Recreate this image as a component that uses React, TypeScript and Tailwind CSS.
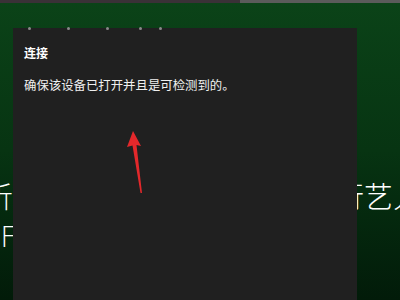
export default function App() {
  return (
    <div className="relative w-[400px] h-[300px] overflow-hidden bg-gradient-to-b from-[#0b4318] via-[#073412] to-[#021b09] font-['Noto_Sans_CJK_SC',sans-serif]">
      {/* top strip */}
      <div className="flex h-[3px]">
        <div className="w-[240px] bg-[#3a3137]" />
        <div className="flex-1 bg-[#5b5b5b]" />
      </div>

      {/* background slide text */}
      <div className="flex flex-col pt-[172px] text-white">
        <div className="flex justify-between text-[29px] leading-[40px] font-light">
          <span className="-ml-[16px]">析</span>
          <span className="-mr-[22px]">行艺人</span>
        </div>
        <div className="mt-[8px] -ml-[7px] text-[28px] leading-[30px] font-light font-['DejaVu_Sans',sans-serif] tracking-[-1px]">IF</div>
      </div>

      {/* flyout panel */}
      <div className="absolute left-[13px] top-[28px] w-[344px] h-[272px] bg-[#202020] px-[11px]">
        <div className="flex h-[3px] -mt-[1px] pl-[4px] gap-[36px]">
          <span className="w-[3px] h-[3px] rounded-full bg-[#8a8a8a]" />
          <span className="w-[3px] h-[3px] rounded-full bg-[#8a8a8a]" />
          <span className="w-[3px] h-[3px] rounded-full bg-[#8a8a8a]" />
          <span className="w-[3px] h-[3px] rounded-full bg-[#8a8a8a] -ml-[6px]" />
          <span className="w-[3px] h-[3px] rounded-full bg-[#8a8a8a] -ml-[19px]" />
        </div>
        <div className="pt-[15px] text-[12px] leading-[16px] font-bold text-white">连接</div>
        <div className="mt-[16px] text-[12.4px] leading-[16px] text-[#f0f0f0]">确保该设备已打开并且是可检测到的。</div>
      </div>

      {/* annotation arrow */}
      <svg className="absolute left-[120px] top-[125px]" width="40" height="75" viewBox="0 0 40 75">
        <path d="M13 6 L21 21 L16.5 20 L22 68 L20.5 68 L12.5 20.5 L7 22 Z" fill="#e3282b" />
      </svg>
    </div>
  );
}
